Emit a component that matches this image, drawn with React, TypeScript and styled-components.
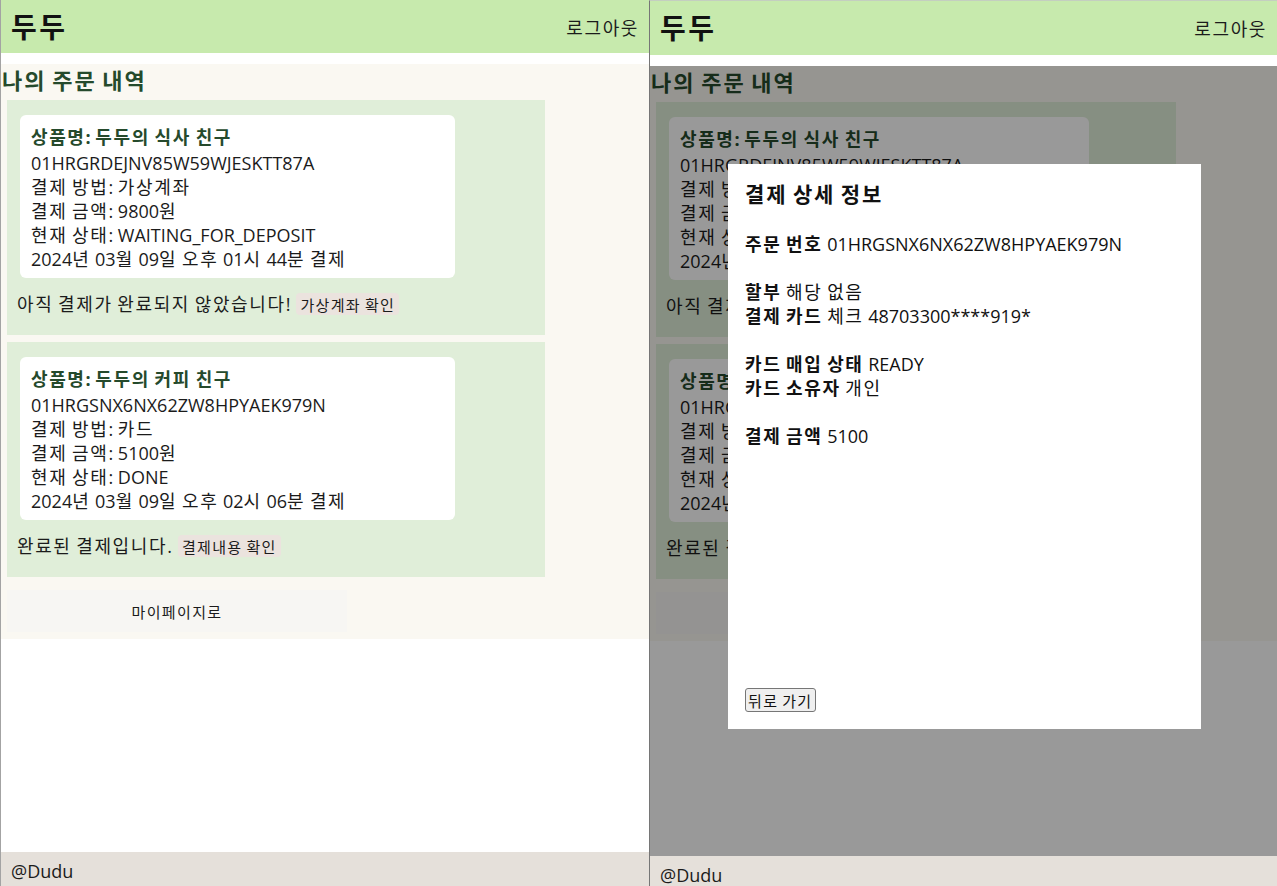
import React from "react";
import styled, { createGlobalStyle } from "styled-components";

const GlobalStyle = createGlobalStyle`
  body {
    margin: 0;
    font-family: "Open Sans", "Noto Sans CJK KR", sans-serif;
    color: #1b1b1b;
  }
`;

const Screen = styled.div`
  display: flex;
  width: 1277px;
  height: 886px;
  overflow: hidden;
  background: #fff;
`;

const Frame = styled.div<{ $w: number; $h: number; $edge: string; $top?: boolean }>`
  position: relative;
  width: ${(p) => p.$w}px;
  height: ${(p) => p.$h}px;
  flex-shrink: 0;
  display: flex;
  flex-direction: column;
  border-left: 1px solid ${(p) => p.$edge};
  border-top: ${(p) => (p.$top ? "1px solid #c4cfc0" : "none")};
  box-sizing: border-box;
`;

const Header = styled.header<{ $h: number }>`
  height: ${(p) => p.$h}px;
  flex-shrink: 0;
  background: #c7eaad;
  display: flex;
  align-items: center;
  justify-content: space-between;
  padding: 0 10px;
`;

const Logo = styled.h1`
  margin: 0;
  font-size: 28px;
  font-weight: 700;
  color: #111;
  line-height: 34px;
`;

const Logout = styled.span`
  font-size: 18px;
  color: #1b1b1b;
`;

const Ko = styled.span`
  letter-spacing: 0.09em;
`;

function ko(text: string) {
  return text
    .split(/([\uAC00-\uD7A3]+)/)
    .map((part, i) =>
      /[\uAC00-\uD7A3]/.test(part) ? <Ko key={i}>{part}</Ko> : part
    );
}

const Body = styled.div`
  position: relative;
  flex: 1;
  margin-top: 11px;
  display: flex;
  flex-direction: column;
`;

const Main = styled.main`
  background: #faf8f2;
  padding-bottom: 7px;
`;

const PageTitle = styled.h2`
  margin: 0;
  padding-left: 1px;
  font-size: 22px;
  line-height: 32px;
  font-weight: 700;
  color: #254a2c;
`;

const OrderList = styled.div`
  display: flex;
  flex-direction: column;
  gap: 7px;
  margin-top: 4px;
`;

const OrderCard = styled.section`
  width: 83%;
  margin-left: 6px;
  background: #e0eed9;
  padding: 15px 0 19px;
`;

const Receipt = styled.div`
  width: 80.8%;
  margin-left: 13px;
  background: #fff;
  border-radius: 6px;
  padding: 8px 11px 7px;
  box-sizing: border-box;
`;

const ProductName = styled.div`
  font-size: 18px;
  font-weight: 700;
  line-height: 28px;
  color: #254a2c;
`;

const Line = styled.div`
  font-size: 18px;
  line-height: 24px;
`;

const Notice = styled.div`
  display: flex;
  align-items: center;
  gap: 6px;
  margin: 14px 0 0 10px;
  font-size: 18px;
  line-height: 24px;
`;

const SmallButton = styled.button`
  height: 22px;
  padding: 0 4px;
  border: none;
  border-radius: 4px;
  background: #ebe3de;
  font-family: inherit;
  font-size: 15px;
  color: #1b1b1b;
`;

const MyPageButton = styled.button`
  display: block;
  width: 340px;
  height: 42px;
  margin: 13px 0 0 6px;
  border: none;
  background: #f7f6f3;
  font-family: inherit;
  font-size: 15px;
  color: #1b1b1b;
`;

const Footer = styled.footer`
  height: 34px;
  flex-shrink: 0;
  background: #e5e0da;
  padding-left: 10px;
  font-size: 18px;
  line-height: 38px;
`;

const Dim = styled.div`
  position: absolute;
  inset: 0;
  background: rgba(0, 0, 0, 0.4);
`;

const Modal = styled.div`
  position: absolute;
  top: 163px;
  left: 78px;
  width: 473px;
  height: 565px;
  box-sizing: border-box;
  background: #fff;
  padding: 16px 17px 17px;
  display: flex;
  flex-direction: column;
`;

const ModalTitle = styled.h3`
  margin: 0 0 24px;
  font-size: 21px;
  line-height: 28px;
  font-weight: 700;
  color: #111;
`;

const InfoGroup = styled.div`
  margin-bottom: 24px;
`;

const InfoRow = styled.div`
  font-size: 18px;
  line-height: 24px;
  color: #111;

  b {
    font-weight: 700;
  }
`;

const BackButton = styled.button`
  margin-top: auto;
  align-self: flex-start;
  height: 24px;
  padding: 0 2px;
  border: 1px solid #767676;
  border-radius: 3px;
  background: #efefef;
  font-family: inherit;
  font-size: 15px;
  color: #111;
`;

type Order = {
  name: string;
  id: string;
  method: string;
  amount: string;
  status: string;
  date: string;
  notice: string;
  action: string;
};

const orders: Order[] = [
  {
    name: "두두의 식사 친구",
    id: "01HRGRDEJNV85W59WJESKTT87A",
    method: "가상계좌",
    amount: "9800원",
    status: "WAITING_FOR_DEPOSIT",
    date: "2024년 03월 09일 오후 01시 44분 결제",
    notice: "아직 결제가 완료되지 않았습니다!",
    action: "가상계좌 확인",
  },
  {
    name: "두두의 커피 친구",
    id: "01HRGSNX6NX62ZW8HPYAEK979N",
    method: "카드",
    amount: "5100원",
    status: "DONE",
    date: "2024년 03월 09일 오후 02시 06분 결제",
    notice: "완료된 결제입니다.",
    action: "결제내용 확인",
  },
];

const details: [string, string][][] = [
  [["주문 번호", "01HRGSNX6NX62ZW8HPYAEK979N"]],
  [
    ["할부", "해당 없음"],
    ["결제 카드", "체크 48703300****919*"],
  ],
  [
    ["카드 매입 상태", "READY"],
    ["카드 소유자", "개인"],
  ],
  [["결제 금액", "5100"]],
];

function OrderPage() {
  return (
    <Main>
      <PageTitle>{ko("나의 주문 내역")}</PageTitle>
      <OrderList>
        {orders.map((o) => (
          <OrderCard key={o.id}>
            <Receipt>
              <ProductName>{ko(`상품명: ${o.name}`)}</ProductName>
              <Line>{o.id}</Line>
              <Line>{ko(`결제 방법: ${o.method}`)}</Line>
              <Line>{ko(`결제 금액: ${o.amount}`)}</Line>
              <Line>{ko(`현재 상태: ${o.status}`)}</Line>
              <Line>{ko(o.date)}</Line>
            </Receipt>
            <Notice>
              <span>{ko(o.notice)}</span>
              <SmallButton>{ko(o.action)}</SmallButton>
            </Notice>
          </OrderCard>
        ))}
      </OrderList>
      <MyPageButton>{ko("마이페이지로")}</MyPageButton>
    </Main>
  );
}

function PaymentModal() {
  return (
    <Modal>
      <ModalTitle>{ko("결제 상세 정보")}</ModalTitle>
      {details.map((group, gi) => (
        <InfoGroup key={gi}>
          {group.map(([label, value]) => (
            <InfoRow key={label}>
              <b>{ko(label)}</b> {ko(value)}
            </InfoRow>
          ))}
        </InfoGroup>
      ))}
      <BackButton>{ko("뒤로 가기")}</BackButton>
    </Modal>
  );
}

export default function App() {
  return (
    <>
      <GlobalStyle />
      <Screen>
        <Frame $w={649} $h={886} $edge="#a3a3a3">
          <Header $h={53}>
            <Logo>{ko("두두")}</Logo>
            <Logout>{ko("로그아웃")}</Logout>
          </Header>
          <Body>
            <OrderPage />
          </Body>
          <Footer>@Dudu</Footer>
        </Frame>
        <Frame $w={628} $h={890} $edge="#767676" $top>
          <Header $h={54}>
            <Logo>{ko("두두")}</Logo>
            <Logout>{ko("로그아웃")}</Logout>
          </Header>
          <Body>
            <OrderPage />
            <Dim />
          </Body>
          <Footer>@Dudu</Footer>
          <PaymentModal />
        </Frame>
      </Screen>
    </>
  );
}
